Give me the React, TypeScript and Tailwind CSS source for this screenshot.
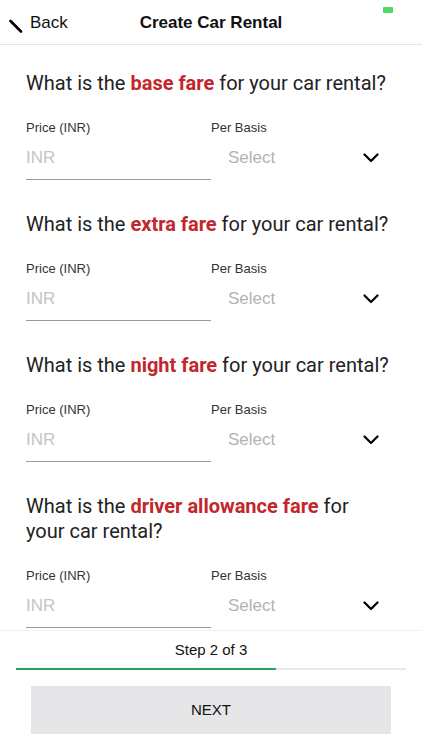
import React from 'react';

const font = { fontFamily: '"Liberation Sans", Arial, sans-serif' };

type Fare = { pre: string; bold: string; post: string };

const fares: Fare[] = [
  { pre: 'What is the ', bold: 'base fare', post: ' for your car rental?' },
  { pre: 'What is the ', bold: 'extra fare', post: ' for your car rental?' },
  { pre: 'What is the ', bold: 'night fare', post: ' for your car rental?' },
  { pre: 'What is the ', bold: 'driver allowance fare', post: ' for your car rental?' },
];

const Chevron: React.FC = () => (
  <svg width="16" height="10" viewBox="0 0 16 10" fill="none">
    <path d="M1.5 1.5 L8 8 L14.5 1.5" stroke="#000" strokeWidth="2.2" strokeLinecap="round" strokeLinejoin="round" />
  </svg>
);

const FareSection: React.FC<{ fare: Fare }> = ({ fare }) => (
  <div className="pt-[26px] pb-[6px]">
    <h2 className="font-['Roboto',sans-serif] text-[20px] leading-[25px] text-[#222] max-w-[365px]">
      {fare.pre}
      <span className="font-bold text-[#c1272d]">{fare.bold}</span>
      {fare.post}
    </h2>
    <div className="grid grid-cols-2 mt-[24px]">
      <div>
        <div className="text-[13px] leading-[16px] text-[#333]">Price (INR)</div>
        <div className="h-[44px] flex items-center border-b border-[#9a9a9a] text-[17px] text-[#c4c4c8]">INR</div>
      </div>
      <div>
        <div className="text-[13px] leading-[16px] text-[#333]">Per Basis</div>
        <div className="h-[44px] flex items-center justify-between pl-[17px] pr-[17px] text-[17px] text-[#b3b3b3]">
          <span>Select</span>
          <Chevron />
        </div>
      </div>
    </div>
  </div>
);

export default function App() {
  return (
    <div className="w-[422px] h-[750px] bg-white flex flex-col overflow-hidden relative" style={font}>
      {/* status bar remnant */}
      <div className="absolute top-[7px] left-[383px] w-[10px] h-[6px] bg-[#4cd964] rounded-[1px]" />

      {/* Header */}
      <div className="h-[45px] shrink-0 border-b border-[#e6e6e6] flex flex-col">
        <div className="h-[15px]" />
        <div className="flex-1 overflow-hidden relative">
          <div className="absolute left-[9px] top-0 flex items-center gap-[7px] -mt-[2px]">
            <svg width="14" height="14" viewBox="0 0 14 14" className="mt-[6px]">
              <path d="M1.5 2 L12 12.5" stroke="#000" strokeWidth="2.6" strokeLinecap="round" />
            </svg>
            <span className="text-[17px] leading-[20px] text-[#111]">Back</span>
          </div>
          <div className="text-center text-[17px] leading-[20px] font-semibold text-[#111] -mt-[2px]">
            Create Car Rental
          </div>
        </div>
      </div>

      {/* Content */}
      <div className="flex-1 overflow-hidden px-[26px]">
        {fares.map((f) => (
          <FareSection key={f.bold} fare={f} />
        ))}
      </div>

      {/* Footer */}
      <div className="shrink-0 border-t border-[#f0f0f0] pt-[9px]">
        <div className="text-center text-[15px] leading-[20px] text-[#111]">Step 2 of 3</div>
        <div className="mx-[16px] mt-[8px] h-[2px] bg-[#e8e8e8] flex">
          <div className="w-2/3 h-full bg-[#2e9e5b]" />
        </div>
        <div className="px-[31px] pt-[16px] pb-[16px]">
          <button className="w-full h-[48px] bg-[#e6e6e8] text-[15px] text-[#111]">NEXT</button>
        </div>
      </div>
    </div>
  );
}
